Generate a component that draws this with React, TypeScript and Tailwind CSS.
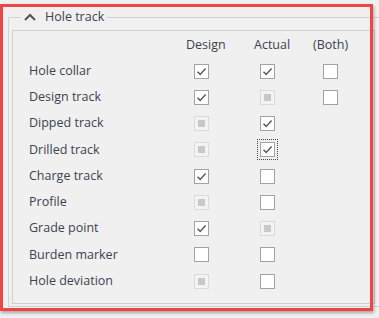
import React from "react";

type Mark = "on" | "off" | "dis" | "focus" | null;

const rows: { label: string; design: Mark; actual: Mark; both: Mark }[] = [
  { label: "Hole collar", design: "on", actual: "on", both: "off" },
  { label: "Design track", design: "on", actual: "dis", both: "off" },
  { label: "Dipped track", design: "dis", actual: "on", both: null },
  { label: "Drilled track", design: "dis", actual: "focus", both: null },
  { label: "Charge track", design: "on", actual: "off", both: null },
  { label: "Profile", design: "dis", actual: "off", both: null },
  { label: "Grade point", design: "on", actual: "dis", both: null },
  { label: "Burden marker", design: "off", actual: "off", both: null },
  { label: "Hole deviation", design: "dis", actual: "off", both: null },
];

function Check() {
  return (
    <svg width="11" height="11" viewBox="0 0 11 11" fill="none">
      <path d="M1.5 5.8 L4.2 8.4 L9.6 2.6" stroke="#5c5c5c" strokeWidth="1.5" />
    </svg>
  );
}

function Box({ mark }: { mark: Mark }) {
  if (!mark) return null;
  if (mark === "dis") {
    return (
      <div className="w-[15px] h-[15px] border border-[#dadada] bg-[#f3f3f3] flex items-center justify-center">
        <div className="w-[7px] h-[7px] bg-[#c8c8c8]" />
      </div>
    );
  }
  return (
    <div
      className={
        "w-[15px] h-[15px] border border-[#a2a2a2] bg-white flex items-center justify-center " +
        (mark === "focus" ? "outline-1 outline-dotted outline-[#444] outline-offset-2" : "")
      }
    >
      {mark !== "off" && <Check />}
    </div>
  );
}

export default function App() {
  return (
    <div className="relative w-[379px] h-[318px] bg-[#f0f0f0] overflow-hidden text-[12.5px] text-[#3c4350] font-['Open_Sans',sans-serif]">
      {/* group box */}
      <div className="ml-[8px] mt-[17px] w-[400px] h-[290px] border-t border-l border-b border-[#d3d3d3] relative">
        <div className="absolute left-[12px] -top-[10px] flex items-center gap-[9px] bg-[#f0f0f0] px-[3px] h-[18px]">
          <svg width="12" height="8" viewBox="0 0 12 8" fill="none">
            <path d="M1 7 L6 2 L11 7" stroke="#555" strokeWidth="2" />
          </svg>
          <span className="leading-none">Hole track</span>
        </div>

        {/* inner panel */}
        <div className="ml-[3px] mt-[12px] w-[363px] h-[274px] border border-[#cfcfcf] pl-[16px]">
          <div className="flex h-[27px] items-end leading-none">
            <div className="w-[157px]" />
            <div className="w-[66px] pb-[7px]">Design</div>
            <div className="w-[61px] pl-[2px] pb-[7px]">Actual</div>
            <div className="w-[50px] pb-[7px]">(Both)</div>
          </div>
          {rows.map((r) => (
            <div key={r.label} className="flex items-center h-[26.25px]">
              <div className="w-[157px] leading-none">{r.label}</div>
              <div className="w-[66px] pl-[8px]">
                <Box mark={r.design} />
              </div>
              <div className="w-[61px] pl-[8px]">
                <Box mark={r.actual} />
              </div>
              <div className="w-[50px] pl-[10px]">
                <Box mark={r.both} />
              </div>
            </div>
          ))}
        </div>
      </div>

      {/* red highlight */}
      <div className="absolute left-0 top-[4px] w-[373px] h-[307px] border-[3px] border-[#f04545] shadow-[1px_2px_3px_rgba(0,0,0,0.3)]" />
    </div>
  );
}
